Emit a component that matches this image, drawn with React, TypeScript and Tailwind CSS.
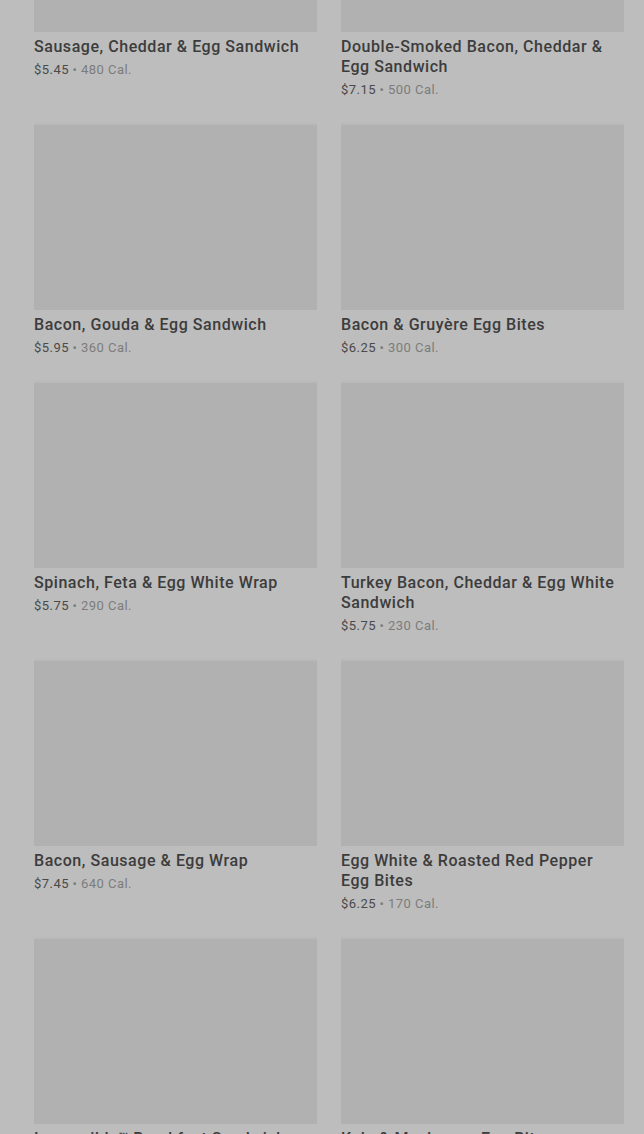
const ITEMS = [
  { name: "Sausage, Cheddar & Egg Sandwich", price: "$5.45", cal: "480" },
  { name: "Double-Smoked Bacon, Cheddar & Egg Sandwich", price: "$7.15", cal: "500" },
  { name: "Bacon, Gouda & Egg Sandwich", price: "$5.95", cal: "360" },
  { name: "Bacon & Gruyère Egg Bites", price: "$6.25", cal: "300" },
  { name: "Spinach, Feta & Egg White Wrap", price: "$5.75", cal: "290" },
  { name: "Turkey Bacon, Cheddar & Egg White Sandwich", price: "$5.75", cal: "230" },
  { name: "Bacon, Sausage & Egg Wrap", price: "$7.45", cal: "640" },
  { name: "Egg White & Roasted Red Pepper Egg Bites", price: "$6.25", cal: "170" },
  { name: "Impossible™ Breakfast Sandwich", price: "$6.45", cal: "420" },
  { name: "Kale & Mushroom Egg Bites", price: "$5.95", cal: "230" },
];

export default function App() {
  return (
    <div
      className="h-[1134px] overflow-hidden bg-[#bdbdbd]"
      style={{ fontFamily: "Roboto, 'Liberation Sans', sans-serif" }}
    >
      {/* menu grid, scrolled under a dim backdrop */}
      <div className="-mt-[155px] grid grid-cols-2 gap-x-6 gap-y-[23px] pl-[34px] pr-5">
        {ITEMS.map((item) => (
          <MenuCard key={item.name} {...item} />
        ))}
      </div>
    </div>
  );
}

function MenuCard({ name, price, cal }: { name: string; price: string; cal: string }) {
  return (
    <div>
      <div className="h-[187px] bg-[#b1b1b1] border-t-2 border-[#b9b9b9]" />
      <p className="mt-[5px] text-[16px] leading-5 font-medium tracking-[0.55px] text-[#3c3c3c]">
        {name}
      </p>
      <p className="mt-[3px] h-5 overflow-hidden text-[13px] leading-5 tracking-[0.45px] text-[#4a4a4a]">
        {price} <span className="text-[#7c7c7c]">• {cal} Cal.</span>
      </p>
    </div>
  );
}
